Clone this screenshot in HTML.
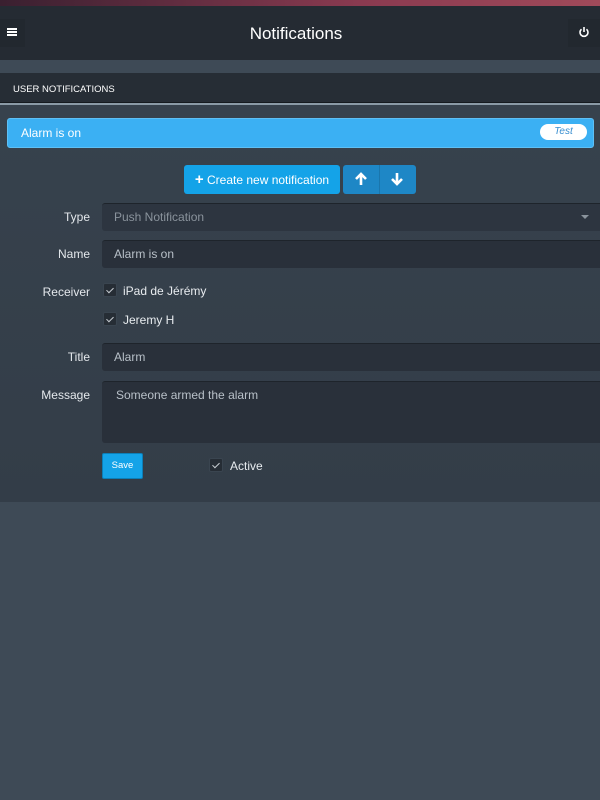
<!DOCTYPE html>
<html><head><meta charset="utf-8"><style>
*{box-sizing:border-box;margin:0;padding:0}
body{width:600px;height:800px;background:#3e4a56;font-family:"Liberation Sans",sans-serif;position:relative;overflow:hidden;color:#e8ecef}
.a{position:absolute}
.lbl{position:absolute;right:510px;font-size:12px;color:#e4e8ec;text-align:right}
.inp{position:absolute;left:102px;right:0;background:#29303a;border-top:1px solid #1e242b;font-size:12px;color:#b8c0c8;padding-left:12px;border-radius:3px 0 0 3px}
.cb{position:absolute;width:14px;height:14px;background:#262d35;border-radius:2px;border:1px solid #1f252c}
.cb:after{content:"";position:absolute;left:4px;top:2px;width:3px;height:6px;border:solid #c8cdd2;border-width:0 1.5px 1.5px 0;transform:rotate(45deg)}
</style></head><body>
<div class="a" style="left:0;top:0;width:600px;height:6px;background:linear-gradient(90deg,#3a2030,#8a3a50 60%,#a04a5a)"></div>
<div class="a" style="left:0;top:6px;width:600px;height:54px;background:#252b33"></div>
<div class="a" style="left:0;top:19px;width:25px;height:28px;background:#22282f"></div>
<div class="a" style="left:7px;top:28px;width:10px;height:2px;background:#fff;box-shadow:0 3px 0 #fff,0 6px 0 #fff"></div>
<div class="a" style="left:-4px;top:24px;width:600px;text-align:center;font-size:17px;color:#fff">Notifications</div>
<div class="a" style="left:568px;top:19px;width:32px;height:28px;background:#22282f"></div>
<svg class="a" style="left:578px;top:26px" width="12" height="12" viewBox="0 0 12 12"><path d="M3.5 3.2A4 4 0 1 0 8.5 3.2" fill="none" stroke="#fff" stroke-width="1.6"/><path d="M6 1v5" stroke="#fff" stroke-width="1.6"/></svg>
<div class="a" style="left:0;top:73px;width:600px;height:30px;background:#262d35;border-bottom:1px solid #151a1f"></div>
<div class="a" style="left:13px;top:84px;font-size:9.5px;color:#fff">USER NOTIFICATIONS</div>
<div class="a" style="left:0;top:103px;width:600px;height:2px;background:#8a9aa6"></div>
<div class="a" style="left:0;top:105px;width:600px;height:397px;background:linear-gradient(#37424d,#333d48)"></div>
<div class="a" style="left:7px;top:118px;width:587px;height:30px;background:#3bb0f3;border-radius:3px;border:1px solid #5ec0f5"></div>
<div class="a" style="left:21px;top:126px;font-size:12px;color:#fff">Alarm is on</div>
<div class="a" style="left:540px;top:124px;width:47px;height:16px;background:#fff;border-radius:8px;font-size:10px;font-style:italic;color:#3a8fd0;text-align:center;line-height:16px;padding-top:0">Test</div>
<div class="a" style="left:184px;top:165px;width:156px;height:29px;background:#14a3e8;border-radius:3px;font-size:12px;color:#fff;line-height:29px;text-align:center"><b style="font-size:15px">+</b> Create new notification</div>
<div class="a" style="left:343px;top:165px;width:73px;height:29px;background:#1e87c6;border-radius:3px"></div>
<div class="a" style="left:379px;top:165px;width:1px;height:29px;background:#1a76ad"></div>
<svg class="a" style="left:354px;top:172px" width="14" height="14" viewBox="0 0 14 14"><path d="M7 13V2M2 7l5-5 5 5" fill="none" stroke="#fff" stroke-width="2.6"/></svg>
<svg class="a" style="left:390px;top:172px" width="14" height="14" viewBox="0 0 14 14"><path d="M7 1v11M2 7l5 5 5-5" fill="none" stroke="#fff" stroke-width="2.6"/></svg>
<div class="lbl" style="top:210px">Type</div>
<div class="inp" style="top:203px;height:28px;line-height:27px;background:#2d3540;color:#8a939c">Push Notification</div>
<div class="a" style="left:581px;top:215px;border:4px solid transparent;border-top:4px solid #8a939c"></div>
<div class="lbl" style="top:247px">Name</div>
<div class="inp" style="top:240px;height:28px;line-height:27px">Alarm is on</div>
<div class="lbl" style="top:285px">Receiver</div>
<div class="cb" style="left:103px;top:283px;border-color:#3a4550"></div>
<div class="a" style="left:123px;top:284px;font-size:12px">iPad de Jérémy</div>
<div class="cb" style="left:103px;top:312px;border-color:#3a4550"></div>
<div class="a" style="left:123px;top:313px;font-size:12px">Jeremy H</div>
<div class="lbl" style="top:350px">Title</div>
<div class="inp" style="top:343px;height:28px;line-height:27px">Alarm</div>
<div class="lbl" style="top:388px">Message</div>
<div class="inp" style="top:381px;height:62px;padding-top:6px;padding-left:14px">Someone armed the alarm</div>
<div class="a" style="left:102px;top:453px;width:41px;height:26px;background:#14a3e8;border-radius:2px;border:1px solid #0c7fb8;font-size:9.5px;color:#fff;text-align:center;line-height:24px">Save</div>
<div class="cb" style="left:209px;top:458px;border-color:#3a4550"></div>
<div class="a" style="left:230px;top:459px;font-size:12px">Active</div>
</body></html>
